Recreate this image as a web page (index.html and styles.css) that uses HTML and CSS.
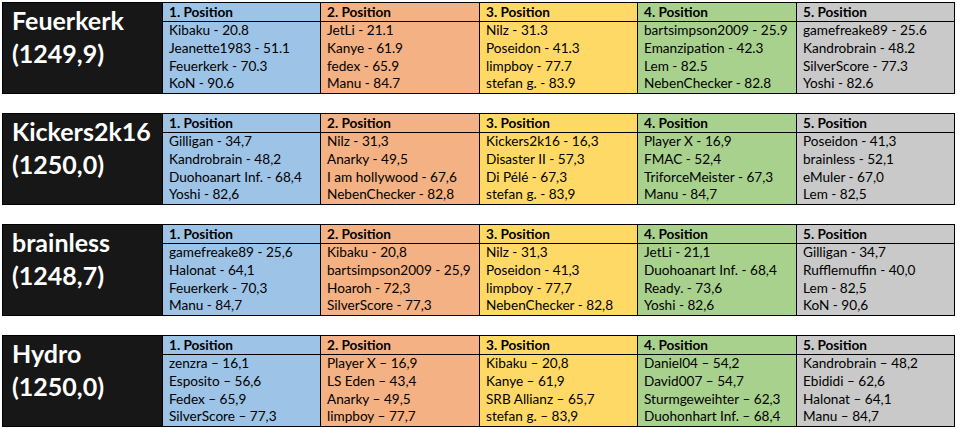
FILE: index.html
```html
<!DOCTYPE html>
<html>
<head>
<meta charset="utf-8">
<link rel="stylesheet" href="styles.css">
</head>
<body>
<div class="page">

<div class="block">
  <div class="name"><div>Feuerkerk</div><div>(1249,9)</div></div>
  <div class="col c1"><div class="head">1. Position</div><div class="rows"><div>Kibaku - 20.8</div><div>Jeanette1983 - 51.1</div><div>Feuerkerk - 70.3</div><div>KoN - 90.6</div></div></div>
  <div class="col c2"><div class="head">2. Position</div><div class="rows"><div>JetLi - 21.1</div><div>Kanye - 61.9</div><div>fedex - 65.9</div><div>Manu - 84.7</div></div></div>
  <div class="col c3"><div class="head">3. Position</div><div class="rows"><div>Nilz - 31.3</div><div>Poseidon - 41.3</div><div>limpboy - 77.7</div><div>stefan g. - 83.9</div></div></div>
  <div class="col c4"><div class="head">4. Position</div><div class="rows"><div>bartsimpson2009 - 25.9</div><div>Emanzipation - 42.3</div><div>Lem - 82.5</div><div>NebenChecker - 82.8</div></div></div>
  <div class="col c5"><div class="head">5. Position</div><div class="rows"><div>gamefreake89 - 25.6</div><div>Kandrobrain - 48.2</div><div>SilverScore - 77.3</div><div>Yoshi - 82.6</div></div></div>
</div>

<div class="block">
  <div class="name"><div>Kickers2k16</div><div>(1250,0)</div></div>
  <div class="col c1"><div class="head">1. Position</div><div class="rows"><div>Gilligan - 34,7</div><div>Kandrobrain - 48,2</div><div>Duohoanart Inf. - 68,4</div><div>Yoshi - 82,6</div></div></div>
  <div class="col c2"><div class="head">2. Position</div><div class="rows"><div>Nilz - 31,3</div><div>Anarky - 49,5</div><div>I am hollywood - 67,6</div><div>NebenChecker - 82,8</div></div></div>
  <div class="col c3"><div class="head">3. Position</div><div class="rows"><div>Kickers2k16 - 16,3</div><div>Disaster II - 57,3</div><div>Di Pélé - 67,3</div><div>stefan g. - 83,9</div></div></div>
  <div class="col c4"><div class="head">4. Position</div><div class="rows"><div>Player X - 16,9</div><div>FMAC - 52,4</div><div>TriforceMeister - 67,3</div><div>Manu - 84,7</div></div></div>
  <div class="col c5"><div class="head">5. Position</div><div class="rows"><div>Poseidon - 41,3</div><div>brainless - 52,1</div><div>eMuler - 67,0</div><div>Lem - 82,5</div></div></div>
</div>

<div class="block">
  <div class="name"><div>brainless</div><div>(1248,7)</div></div>
  <div class="col c1"><div class="head">1. Position</div><div class="rows"><div>gamefreake89 - 25,6</div><div>Halonat - 64,1</div><div>Feuerkerk - 70,3</div><div>Manu - 84,7</div></div></div>
  <div class="col c2"><div class="head">2. Position</div><div class="rows"><div>Kibaku - 20,8</div><div>bartsimpson2009 - 25,9</div><div>Hoaroh - 72,3</div><div>SilverScore - 77,3</div></div></div>
  <div class="col c3"><div class="head">3. Position</div><div class="rows"><div>Nilz - 31,3</div><div>Poseidon - 41,3</div><div>limpboy - 77,7</div><div>NebenChecker - 82,8</div></div></div>
  <div class="col c4"><div class="head">4. Position</div><div class="rows"><div>JetLi - 21,1</div><div>Duohoanart Inf. - 68,4</div><div>Ready. - 73,6</div><div>Yoshi - 82,6</div></div></div>
  <div class="col c5"><div class="head">5. Position</div><div class="rows"><div>Gilligan - 34,7</div><div>Rufflemuffin - 40,0</div><div>Lem - 82,5</div><div>KoN - 90,6</div></div></div>
</div>

<div class="block">
  <div class="name"><div>Hydro</div><div>(1250,0)</div></div>
  <div class="col c1"><div class="head">1. Position</div><div class="rows"><div>zenzra – 16,1</div><div>Esposito – 56,6</div><div>Fedex – 65,9</div><div>SilverScore – 77,3</div></div></div>
  <div class="col c2"><div class="head">2. Position</div><div class="rows"><div>Player X – 16,9</div><div>LS Eden – 43,4</div><div>Anarky – 49,5</div><div>limpboy – 77,7</div></div></div>
  <div class="col c3"><div class="head">3. Position</div><div class="rows"><div>Kibaku – 20,8</div><div>Kanye – 61,9</div><div>SRB Allianz – 65,7</div><div>stefan g. – 83,9</div></div></div>
  <div class="col c4"><div class="head">4. Position</div><div class="rows"><div>Daniel04 – 54,2</div><div>David007 – 54,7</div><div>Sturmgeweihter – 62,3</div><div>Duohonhart Inf. – 68,4</div></div></div>
  <div class="col c5"><div class="head">5. Position</div><div class="rows"><div>Kandrobrain – 48,2</div><div>Ebididi – 62,6</div><div>Halonat – 64,1</div><div>Manu – 84,7</div></div></div>
</div>

</div>
</body>
</html>
```
FILE: styles.css
```css
html, body {
  margin: 0;
  padding: 0;
  background: #ffffff;
}
.page {
  padding: 2px 0 0 2px;
  display: flex;
  flex-direction: column;
  gap: 19px;
  font-family: Lato, "Open Sans", sans-serif;
  color: #000;
}
.block {
  width: 953px;
  height: 92px;
  box-sizing: border-box;
  border: 1px solid #000;
  display: grid;
  grid-template-columns: 159px 158px 159px 158px 159px 158px;
}
.name {
  background: #171717;
  color: #fff;
  font-weight: 700;
  font-size: 25px;
  line-height: 33px;
  padding: 1px 0 0 9px;
}
.col {
  border-left: 1px solid #000;
  display: flex;
  flex-direction: column;
  font-size: 13.6px;
  white-space: nowrap;
  overflow: hidden;
}
.head {
  height: 18px;
  line-height: 18px;
  font-weight: 700;
  padding-left: 6px;
  border-bottom: 1px solid #000;
}
.rows {
  flex: 1;
  display: flex;
  flex-direction: column;
  padding-left: 6px;
}
.rows > div {
  flex: 1;
  line-height: 17.75px;
}
.c1 { background: #9dc3e6; }
.c2 { background: #f4b183; }
.c3 { background: #ffd966; }
.c4 { background: #a9d18e; }
.c5 { background: #c9c9c9; }
```
